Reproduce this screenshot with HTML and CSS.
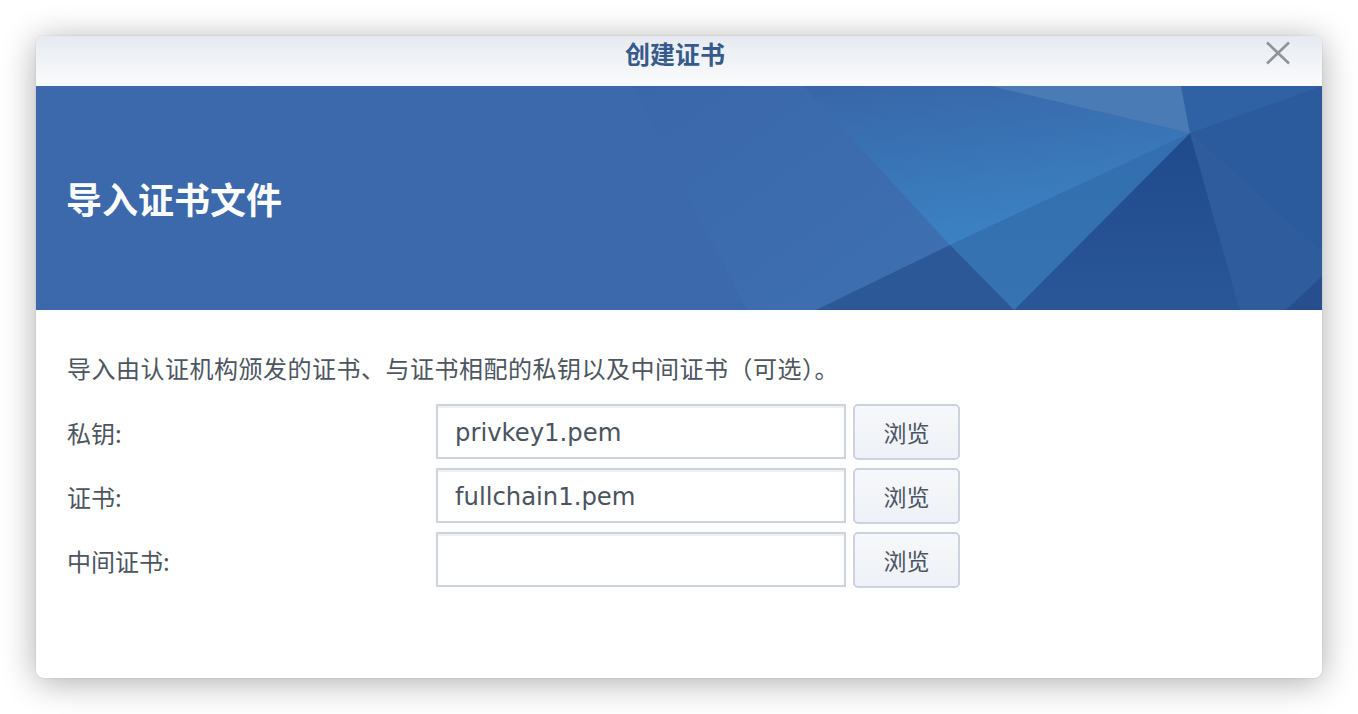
FILE: index.html
```html
<!DOCTYPE html>
<html lang="zh-CN">
<head>
<meta charset="utf-8">
<title>创建证书</title>
<link rel="stylesheet" href="styles.css">
</head>
<body>
<div class="dialog">
  <div class="titlebar">
    <div class="title">创建证书</div>
    <button class="close" aria-label="关闭">
      <svg width="26" height="24" viewBox="0 0 26 24">
        <path d="M2 1.5 L24 22.5 M24 1.5 L2 22.5" stroke="#8f9399" stroke-width="2.6" stroke-linecap="butt" fill="none"/>
      </svg>
    </button>
  </div>
  <div class="banner">
    <svg class="banner-art" viewBox="0 0 1286 224" preserveAspectRatio="none">
      <defs>
        <linearGradient id="gCenter" x1="0" y1="0" x2="0.3" y2="1">
          <stop offset="0" stop-color="#3866a8"/>
          <stop offset="1" stop-color="#3b82c3"/>
        </linearGradient>
        <linearGradient id="gDark" x1="0" y1="0" x2="0" y2="1">
          <stop offset="0" stop-color="#1f4a8c"/>
          <stop offset="1" stop-color="#2a5797"/>
        </linearGradient>
        <linearGradient id="gMid" x1="0" y1="0" x2="0" y2="1">
          <stop offset="0" stop-color="#336fb0"/>
          <stop offset="1" stop-color="#3573b2"/>
        </linearGradient>
        <linearGradient id="gLeft" x1="0" y1="0" x2="1" y2="1">
          <stop offset="0" stop-color="#3a67aa"/>
          <stop offset="1" stop-color="#3e70b2"/>
        </linearGradient>
      </defs>
      <rect x="0" y="0" width="1286" height="224" fill="#3c69ab"/>
      <polygon points="596,0 767,0 914,159 780,224 711,224" fill="url(#gLeft)"/>
      <polygon points="767,0 955,0 1154,47 914,159" fill="url(#gCenter)"/>
      <polygon points="955,0 1145,0 1154,47" fill="#4a7bb4"/>
      <polygon points="1145,0 1286,0 1154,47" fill="#2f61a5"/>
      <polygon points="1286,0 1286,167 1154,47" fill="#2b5a9d"/>
      <polygon points="1154,47 1286,167 1286,224 1204,224" fill="#2e5c9c"/>
      <polygon points="1154,47 1204,224 978,224" fill="url(#gDark)"/>
      <polygon points="1154,47 978,224 914,159" fill="url(#gMid)"/>
      <polygon points="914,159 978,224 780,224" fill="#2d5898"/>
      <polygon points="1286,190 1286,224 1250,224" fill="#274f8e"/>
    </svg>
    <h1 class="banner-title">导入证书文件</h1>
  </div>
  <div class="content">
    <p class="desc">导入由认证机构颁发的证书、与证书相配的私钥以及中间证书（可选）。</p>
    <div class="form">
      <label class="label">私钥:</label>
      <div class="field">privkey1.pem</div>
      <button class="browse">浏览</button>

      <label class="label">证书:</label>
      <div class="field">fullchain1.pem</div>
      <button class="browse">浏览</button>

      <label class="label">中间证书:</label>
      <div class="field"></div>
      <button class="browse">浏览</button>
    </div>
  </div>
</div>
</body>
</html>
```

FILE: styles.css
```css
* { box-sizing: border-box; }

html, body {
  margin: 0;
  padding: 0;
  background: #ffffff;
}

body {
  padding: 36px;
  font-family: "Noto Sans CJK SC", "Noto Sans", sans-serif;
  width: 1358px;
  height: 714px;
  overflow: hidden;
}

.dialog {
  width: 1286px;
  height: 642px;
  border-radius: 8px;
  background: #ffffff;
  box-shadow: 0 4px 34px rgba(0, 0, 0, 0.33), 0 0 2px rgba(0,0,0,0.12);
  overflow: hidden;
  display: flex;
  flex-direction: column;
}

.titlebar {
  height: 50px;
  flex: none;
  background: linear-gradient(#e6eaf0, #fbfcfd);
  display: flex;
  justify-content: center;
  align-items: flex-start;
  padding-right: 8px;
  position: relative;
}

.title {
  font-size: 25px;
  line-height: 34px;
  font-weight: 700;
  color: #375a8d;
}

.close {
  position: absolute;
  right: 31px;
  top: 5px;
  width: 26px;
  height: 24px;
  padding: 0;
  border: 0;
  background: transparent;
  display: flex;
}

.banner {
  height: 224px;
  flex: none;
  position: relative;
  display: flex;
  align-items: center;
  padding-left: 30px;
}

.banner-art {
  position: absolute;
  inset: 0;
  width: 100%;
  height: 100%;
}

.banner-title {
  position: relative;
  margin: 0;
  font-size: 36px;
  line-height: 52px;
  font-weight: 700;
  color: #ffffff;
}

.content {
  padding: 42px 31px 0 31px;
  color: #4c5560;
}

.desc {
  margin: 0 0 20px 0;
  font-size: 24px;
  line-height: 32px;
  letter-spacing: 0.5px;
}

.form {
  display: grid;
  grid-template-columns: 362px 410px 107px;
  grid-auto-rows: 55px;
  column-gap: 7px;
  row-gap: 9px;
  align-items: center;
}

.label {
  font-size: 24px;
  line-height: 32px;
  color: #4c5560;
  padding-top: 2px;
}

.field {
  height: 55px;
  border: 2px solid #cbd3dd;
  background: #ffffff;
  box-shadow: inset 0 2px 0 #eef1f4;
  font-family: "DejaVu Sans", Verdana, sans-serif;
  font-size: 24.3px;
  color: #4a5360;
  display: flex;
  align-items: center;
  padding-left: 17px;
  padding-top: 2px;
}

.browse {
  height: 56px;
  border: 2px solid #cbd3dd;
  border-radius: 5px;
  background: linear-gradient(#f6f8fb, #eef1f6);
  font-family: "Noto Sans CJK SC", "Noto Sans", sans-serif;
  font-size: 23px;
  color: #4a5360;
  padding: 0;
}
```
